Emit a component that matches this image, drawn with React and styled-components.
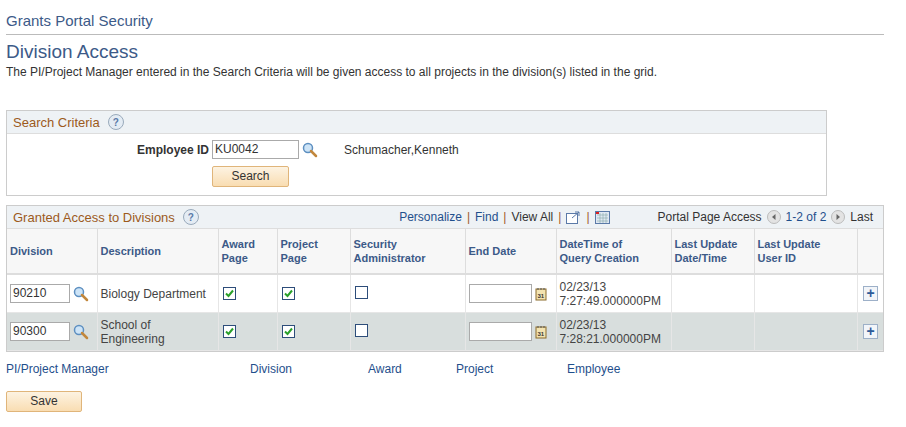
import styled, { createGlobalStyle } from "styled-components";

const Global = createGlobalStyle`
  body { margin: 0; background: #fff; font-family: "Liberation Sans", Arial, sans-serif; font-size: 12px; color: #333; }
`;

const Page = styled.div`
  padding: 12px 22px 0 6px;
`;

const Breadcrumb = styled.div`
  font-size: 15px;
  color: #3c5a88;
  padding-bottom: 5px;
  border-bottom: 1px solid #bbb;
  width: 878px;
`;

const Title = styled.h1`
  font-size: 19px;
  font-weight: normal;
  color: #3c5a88;
  margin: 6px 0 2px 0;
`;

const Intro = styled.div`
  color: #333;
  margin-bottom: 31px;
`;

const Box = styled.div`
  border: 1px solid #ccc;
  width: ${(p) => p.$w}px;
  margin-bottom: ${(p) => p.$mb || 0}px;
`;

const BoxHead = styled.div`
  background: #eef2f5;
  border-bottom: 1px solid #ddd;
  height: 22px;
  display: flex;
  align-items: center;
  padding: 0 6px;
  font-size: 13px;
  color: #9c5a1c;
  gap: 8px;
`;

const Help = styled.span`
  width: 14px;
  height: 14px;
  border-radius: 50%;
  border: 1px solid #9ab;
  background: #e4ecf4;
  color: #5b7aa8;
  font-size: 10px;
  font-weight: bold;
  display: inline-flex;
  align-items: center;
  justify-content: center;
`;

const SearchBody = styled.div`
  display: grid;
  grid-template-columns: 205px 110px 22px 1fr;
  align-items: center;
  padding: 6px 0 8px;
  row-gap: 7px;
`;

const Label = styled.label`
  font-weight: bold;
  text-align: right;
  padding-right: 3px;
`;

const Input = styled.div`
  width: ${(p) => p.$w}px;
  border: 1px solid #aaa;
  background: #fff;
  padding-left: 2px;
  line-height: 17px;
  box-sizing: border-box;
  font-size: 12px;
  color: #333;
  height: 19px;
`;

const Btn = styled.div`
  width: ${(p) => p.$w}px;
  height: 19px;
  border: 1px solid #e0b57a;
  border-radius: 2px;
  background: linear-gradient(#fdf3e2, #f9ddb2);
  text-align: center;
  line-height: 19px;
  color: #333;
  font-size: 12px;
`;

const Tools = styled.div`
  margin-left: auto;
  display: flex;
  align-items: center;
  gap: 5px;
  font-size: 12px;
  color: #333;
  padding-right: 4px;
`;

const Link = styled.span`
  color: #1f4f8c;
`;

const Sep = styled.span`
  color: #a0592a;
`;

const Table = styled.table`
  border-collapse: collapse;
  width: 100%;
  table-layout: fixed;
`;

const Th = styled.th`
  background: #f7f7f7;
  color: #3c5a88;
  font-size: 11px;
  text-align: left;
  vertical-align: middle;
  padding: 0 3px;
  height: 44px;
  border-right: 1px solid #ddd;
  border-bottom: 2px solid #ddd;
  line-height: 14px;
  &:last-child { border-right: none; }
`;

const Td = styled.td`
  background: ${(p) => (p.$alt ? "#d8dedd" : "#fff")};
  height: 37px;
  padding: 0 3px;
  border-right: 1px solid #e6e6e6;
  border-bottom: 1px solid #e6e6e6;
  vertical-align: middle;
  color: #444;
  line-height: 14px;
  &:last-child { border-right: none; }
`;

const Cell = styled.div`
  display: flex;
  align-items: center;
  gap: 3px;
  justify-content: ${(p) => p.$end ? "flex-end" : "flex-start"};
`;

const Check = styled.span`
  width: 11px;
  height: 11px;
  border: 1px solid #2d4d7a;
  background: #fff;
  display: inline-flex;
  align-items: center;
  justify-content: center;
  margin-left: 1px;
`;

const Plus = styled.span`
  width: 13px;
  height: 13px;
  border: 1px solid #9db0c8;
  background: #f2f5f9;
  color: #2d5b99;
  font-weight: bold;
  font-size: 14px;
  line-height: 12px;
  text-align: center;
  margin-right: 2px;
`;

const Footer = styled.div`
  display: grid;
  grid-template-columns: 244px 118px 88px 111px auto;
  margin: 10px 0 15px;
`;

const Lens = () => (
  <svg width="16" height="16" viewBox="0 0 16 16">
    <circle cx="6" cy="6" r="4.5" fill="#cde4f7" stroke="#5d8fc0" strokeWidth="1.5" />
    <path d="M9 9l5 5" stroke="#c2873c" strokeWidth="2.5" strokeLinecap="round" />
  </svg>
);

const Cal = () => (
  <svg width="13" height="14" viewBox="0 0 13 14">
    <rect x="1" y="2" width="10" height="11" fill="#f3e3b0" stroke="#8a6a2a" />
    <path d="M3 1v2M6 1v2M9 1v2" stroke="#555" />
    <text x="2.5" y="11" fontSize="6" fontFamily="Liberation Sans" fontWeight="bold" fill="#333">31</text>
  </svg>
);

const Tick = () => (
  <svg width="9" height="9" viewBox="0 0 9 9">
    <path d="M1 4.5l2.5 2.5L8 1.5" fill="none" stroke="#2aa02a" strokeWidth="2" />
  </svg>
);

const Arrow = ({ right }) => (
  <svg width="14" height="14" viewBox="0 0 14 14">
    <circle cx="7" cy="7" r="6.5" fill="#e3e3e3" stroke="#bbb" />
    <path d={right ? "M5.5 4l3.5 3-3.5 3z" : "M8.5 4L5 7l3.5 3z"} fill="#666" />
  </svg>
);

const rows = [
  { div: "90210", desc: "Biology Department", dt: ["02/23/13", "7:27:49.000000PM"] },
  { div: "90300", desc: ["School of", "Engineering"], dt: ["02/23/13", "7:28:21.000000PM"], alt: true },
];

const cols = [90, 121, 59, 73, 115, 91, 115, 83, 103, 26];

export default function App() {
  return (
    <Page>
      <Global />
      <Breadcrumb>Grants Portal Security</Breadcrumb>
      <Title>Division Access</Title>
      <Intro>The PI/Project Manager entered in the Search Criteria will be given access to all projects in the division(s) listed in the grid.</Intro>

      <Box $w={819} $mb={9}>
        <BoxHead>Search Criteria <Help>?</Help></BoxHead>
        <SearchBody>
          <Label>Employee ID</Label>
          <Cell><Input $w={87}>KU0042</Input><Lens /></Cell>
          <span />
          <span>Schumacher,Kenneth</span>
          <span />
          <Btn $w={75}>Search</Btn>
        </SearchBody>
      </Box>

      <Box $w={876}>
        <BoxHead>
          Granted Access to Divisions <Help>?</Help>
          <Tools>
            <Link>Personalize</Link><Sep>|</Sep><Link>Find</Link><Sep>|</Sep>
            <span>View All</span><Sep>|</Sep>
            <svg width="15" height="13" viewBox="0 0 15 13"><rect x="0.5" y="2.5" width="11" height="10" fill="#fff" stroke="#5b7aa8" /><path d="M6 7l7-6M9 1h4v4" fill="none" stroke="#5b7aa8" /></svg>
            <Sep>|</Sep>
            <svg width="15" height="13" viewBox="0 0 15 13"><rect x="0.5" y="0.5" width="14" height="12" fill="#dfe8f3" stroke="#5b7aa8" /><path d="M2 4h11M2 7h11M2 10h11M5 2v10M8 2v10M11 2v10" stroke="#8aa" strokeWidth="0.6" /><rect x="1" y="1" width="3" height="2" fill="#d22" /></svg>
            <span style={{ width: 38 }} />
            <span>Portal Page Access</span>
            <Arrow /><Link>1-2 of 2</Link><Arrow right /><span>Last</span>
          </Tools>
        </BoxHead>
        <Table>
          <colgroup>{cols.map((w, i) => <col key={i} style={{ width: w }} />)}</colgroup>
          <thead>
            <tr>
              <Th>Division</Th><Th>Description</Th><Th>Award<br />Page</Th><Th>Project<br />Page</Th>
              <Th>Security<br />Administrator</Th><Th>End Date</Th><Th>DateTime of<br />Query Creation</Th>
              <Th>Last Update<br />Date/Time</Th><Th>Last Update<br />User ID</Th><Th />
            </tr>
          </thead>
          <tbody>
            {rows.map((r) => (
              <tr key={r.div}>
                <Td $alt={r.alt}><Cell><Input $w={60}>{r.div}</Input><Lens /></Cell></Td>
                <Td $alt={r.alt}>{Array.isArray(r.desc) ? <>{r.desc[0]}<br />{r.desc[1]}</> : r.desc}</Td>
                <Td $alt={r.alt}><Check><Tick /></Check></Td>
                <Td $alt={r.alt}><Check><Tick /></Check></Td>
                <Td $alt={r.alt}><Check /></Td>
                <Td $alt={r.alt}><Cell><Input $w={63} /><Cal /></Cell></Td>
                <Td $alt={r.alt}>{r.dt[0]}<br />{r.dt[1]}</Td>
                <Td $alt={r.alt} />
                <Td $alt={r.alt} />
                <Td $alt={r.alt}><Cell $end><Plus>+</Plus></Cell></Td>
              </tr>
            ))}
          </tbody>
        </Table>
      </Box>

      <Footer>
        <Link>PI/Project Manager</Link><Link>Division</Link><Link>Award</Link><Link>Project</Link><Link>Employee</Link>
      </Footer>
      <Btn $w={74}>Save</Btn>
    </Page>
  );
}
